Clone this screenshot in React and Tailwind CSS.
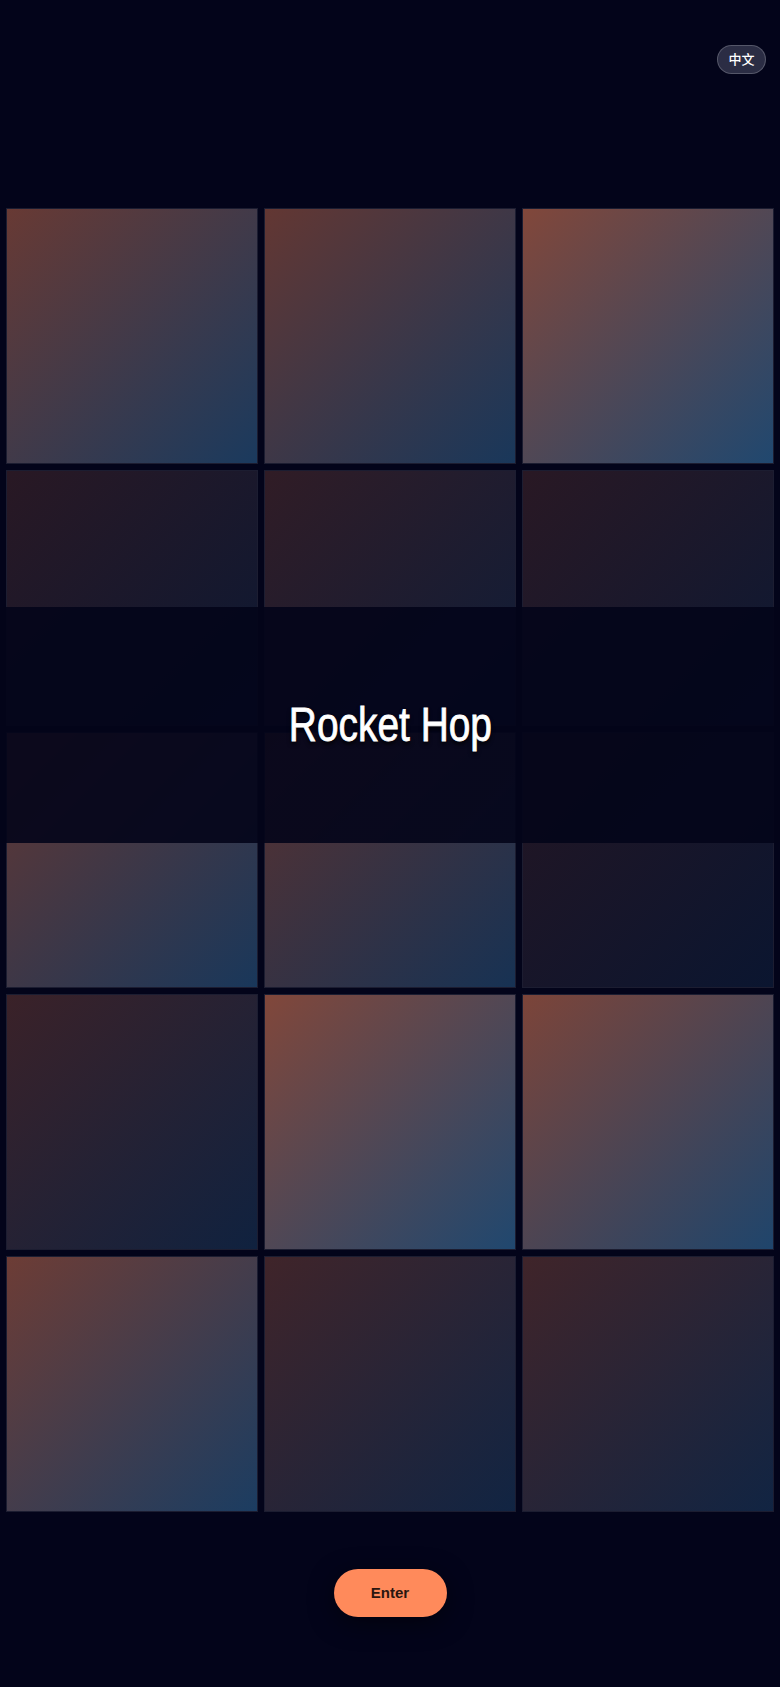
import React from 'react';

// tile strength, row by row
const tiles = [
  0.4, 0.38, 0.5,
  0.15, 0.18, 0.15,
  0.38, 0.34, 0.13,
  0.22, 0.5, 0.48,
  0.42, 0.24, 0.24,
];

const Tile = ({ level }) => (
  <div className="relative h-[256px] overflow-hidden border border-white/10 bg-[#03041a]">
    <div
      className="absolute inset-0 bg-[linear-gradient(135deg,#ff8a5b_0%,#3d8bc4_100%)]"
      style={{ opacity: level }}
    />
  </div>
);

const App = () => (
  <div className="min-h-[1687px] bg-[#03041a] font-['Liberation_Sans',Arial,sans-serif] text-white">
    <div className="flex justify-end pt-[45px] pr-[14px]">
      <button className="h-[29px] w-[49px] rounded-full border border-white/20 bg-[#2b2d44] text-[13px] font-medium text-white font-['Liberation_Sans','Noto_Sans_CJK_SC',sans-serif]">
        中文
      </button>
    </div>

    <div className="relative mt-[134px]">
      <div className="grid grid-cols-3 gap-[6px] px-[6px]">
        {tiles.map((level, i) => (
          <Tile key={i} level={level} />
        ))}
      </div>
      <div className="absolute inset-x-0 top-[399px] flex h-[236px] items-center justify-center bg-[#03041a]/90">
        <h1 className="inline-block scale-x-[0.81] text-[48px] leading-none text-white [-webkit-text-stroke:0.8px_white] [text-shadow:0_3px_5px_rgba(0,0,0,0.95)]">
          Rocket Hop
        </h1>
      </div>
    </div>

    <div className="mt-[57px] flex justify-center pb-[70px]">
      <button className="h-12 w-[113px] rounded-full bg-[#ff8a5b] text-[15px] font-bold text-[#2a1610] shadow-[0_6px_24px_rgba(0,0,0,0.5)]">
        Enter
      </button>
    </div>
  </div>
);

export default App;
